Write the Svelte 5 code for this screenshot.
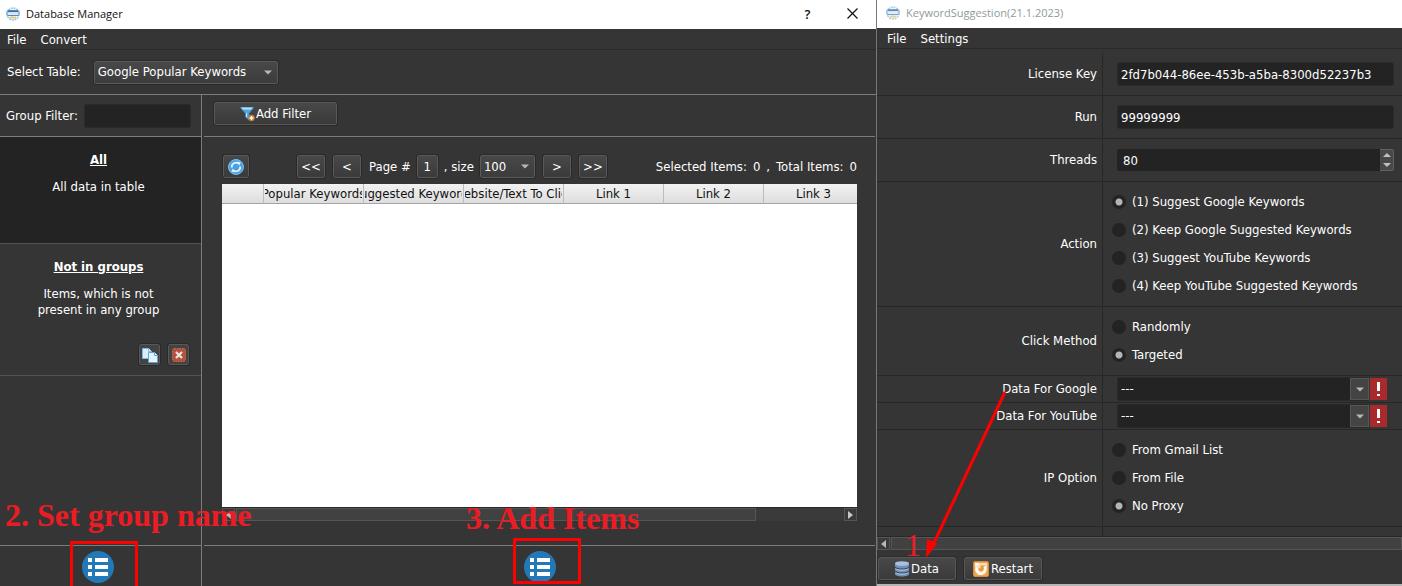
<script>
  let table = $state('Google Popular Keywords');
  let groupFilter = $state('');
  let pageSize = $state('100');
  let license = $state('2fd7b044-86ee-453b-a5ba-8300d52237b3');
  let run = $state('99999999');
  let threads = $state(80);
  let action = $state(0);
  let click = $state(1);
  let proxy = $state(2);

  const actions = [
    '(1) Suggest Google Keywords',
    '(2) Keep Google Suggested Keywords',
    '(3) Suggest YouTube Keywords',
    '(4) Keep YouTube Suggested Keywords'
  ];
  const clicks = ['Randomly', 'Targeted'];
  const proxies = ['From Gmail List', 'From File', 'No Proxy'];
  const columns = ['', 'Popular Keywords', 'Suggested Keywords', 'Website/Text To Click', 'Link 1', 'Link 2', 'Link 3'];
</script>

{#snippet appIcon()}
  <svg class="app-icon" width="14" height="14" viewBox="0 0 14 14" aria-hidden="true">
    <circle cx="7" cy="7" r="6" fill="#eaf5fb" stroke="#8fc6e2" stroke-width="1.4" stroke-dasharray="2 .8" />
    <rect x="1" y="3.5" width="12" height="5" rx="1" fill="#dce8f4" stroke="#5d89ba" />
    <path d="M2 4.500h10" stroke="#3f6ea8" stroke-width="1.200" />
    <path d="M4 10.500h2M8 10.500h2M6 9.500l2 2" stroke="#e8c06a" stroke-width="1.300" />
  </svg>
{/snippet}

{#snippet down()}
  <svg class="down" width="8" height="5" viewBox="0 0 8 5" aria-hidden="true"><path d="M0 .5h8L4 4.500z" fill="#b8b8b8" /></svg>
{/snippet}

{#snippet listIcon()}
  <svg width="32" height="32" viewBox="0 0 32 32" aria-hidden="true">
    <circle cx="16" cy="16" r="16" fill="#2379b7" />
    <path d="M6 9h4M13 9h13M6 16h4M13 16h13M6 23h4M13 23h13" stroke="#fff" stroke-width="4" />
  </svg>
{/snippet}

{#snippet radios(name, items, value, pick)}
  <div class="radios">
    {#each items as item, i}
      <label class="radio">
        <input type="radio" {name} checked={value === i} onchange={() => pick(i)} />
        {item}
      </label>
    {/each}
  </div>
{/snippet}

<div class="desktop">
  <section class="window manager">
    <header class="title">
      {@render appIcon()}
      <span>Database Manager</span>
      <button class="caption help" aria-label="Help">?</button>
      <button class="caption" aria-label="Close">
        <svg width="11" height="11" viewBox="0 0 11 11"><path d="M.5.5l10 10M10.500.5l-10 10" stroke="#111" stroke-width="1.200" /></svg>
      </button>
    </header>
    <nav class="menu">
      <button>File</button>
      <button>Convert</button>
    </nav>
    <div class="table-bar">
      <label for="table">Select Table:</label>
      <span class="combo">
        <select id="table" bind:value={table}><option>Google Popular Keywords</option></select>
        {@render down()}
      </span>
    </div>

    <div class="body">
      <aside>
        <div class="group-filter">
          <label for="group">Group Filter:</label>
          <input id="group" type="text" bind:value={groupFilter} />
        </div>
        <div class="group selected">
          <h2>All</h2>
          <p>All data in table</p>
        </div>
        <div class="group">
          <h2>Not in groups</h2>
          <p>Items, which is not present in any group</p>
          <div class="group-tools">
            <button class="tool" aria-label="Copy group">
              <svg width="16" height="16" viewBox="0 0 16 16">
                <path d="M.5 1.500h6l3 3v7h-9z" fill="#d9eefb" stroke="#7db9e6" />
                <path d="M6.500 1.500v3h3" fill="#fff" stroke="#7db9e6" />
                <path d="M6.500 5.500h6l3 3v7h-9z" fill="#e4f3fc" stroke="#5ea5dc" />
                <path d="M12.500 5.500v3h3" fill="#fff" stroke="#5ea5dc" />
              </svg>
            </button>
            <button class="tool" aria-label="Delete group">
              <svg width="14" height="14" viewBox="0 0 14 14">
                <rect x=".5" y=".5" width="13" height="13" rx="2" fill="#b0543f" stroke="#cf6a50" stroke-dasharray="1.500 1" />
                <path d="M4 4l6 6M10 4l-6 6" stroke="#f4e4df" stroke-width="2.200" />
              </svg>
            </button>
          </div>
        </div>
        <footer><button class="round" aria-label="Group menu">{@render listIcon()}</button></footer>
      </aside>

      <main>
        <div class="filters">
          <button class="btn add">
            <svg width="15" height="16" viewBox="0 0 15 16" aria-hidden="true">
              <path d="M.5 1.500h13L9 7.500V14l-3.500-3V7.500z" fill="#55a6dd" stroke="#3d86be" />
              <path d="M1 1.500h12l-1.500 2h-9z" fill="#b9e2f8" />
              <path d="M6.500 7v4" stroke="#c5e6f8" />
              <circle cx="11.500" cy="12" r="3.200" fill="#c9792f" />
              <path d="M11.500 10v4M9.500 12h4" stroke="#fff" stroke-width="1.300" />
            </svg>
            Add Filter
          </button>
        </div>
        <div class="content">
          <div class="pager">
            <button class="btn refresh" aria-label="Refresh">
              <svg width="16" height="16" viewBox="0 0 16 16">
                <circle cx="8" cy="8" r="7.500" fill="#4ba0de" stroke="#7cc0ee" />
                <path d="M3.800 8.500A4.200 4.200 0 0 1 10.500 4.600M12.200 7.500A4.200 4.200 0 0 1 5.500 11.400" fill="none" stroke="#e3f3fd" stroke-width="1.800" />
                <path d="M9.300 2.500l3.500 1-1.800 3.200zM6.700 13.500l-3.500-1L5 9.300z" fill="#e3f3fd" />
              </svg>
            </button>
            <button class="btn step">&lt;&lt;</button>
            <button class="btn step">&lt;</button>
            <div class="paging">
              <span>Page #</span>
              <button class="btn page">1</button>
              <label for="size">, size</label>
              <span class="combo size">
                <select id="size" bind:value={pageSize}><option>100</option></select>
                {@render down()}
              </span>
            </div>
            <button class="btn step">&gt;</button>
            <button class="btn step">&gt;&gt;</button>
            <span class="totals"><span>Selected Items:</span><span>0</span><span>,</span><span>Total Items:</span><span>0</span></span>
          </div>
          <div class="grid-view">
            <table>
              <thead>
                <tr>
                  {#each columns as column}
                    <th><div>{column}</div></th>
                  {/each}
                </tr>
              </thead>
            </table>
          </div>
          <div class="scroll">
            <button aria-label="Scroll left"><svg width="5" height="8" viewBox="0 0 5 8"><path d="M5 0v8L0 4z" fill="#b8b8b8" /></svg></button>
            <div class="thumb"></div>
            <button aria-label="Scroll right"><svg width="5" height="8" viewBox="0 0 5 8"><path d="M0 0v8l5-4z" fill="#c8c8c8" /></svg></button>
          </div>
        </div>
        <footer><button class="round" aria-label="Item menu">{@render listIcon()}</button></footer>
      </main>
    </div>

    <div class="frame frame-group"></div>
    <div class="frame frame-items"></div>
    <div class="note note-group">2. Set group name</div>
    <div class="note note-items">3. Add Items</div>
  </section>

  <section class="window suggestion">
    <header class="title inactive">
      {@render appIcon()}
      <span>KeywordSuggestion(21.1.2023)</span>
    </header>
    <nav class="menu">
      <button>File</button>
      <button>Settings</button>
    </nav>
    <form class="form" onsubmit={(e) => e.preventDefault()}>
      <div class="row field">
        <label for="license">License Key</label>
        <div class="cell"><input id="license" type="text" bind:value={license} /></div>
      </div>
      <div class="row field">
        <label for="run">Run</label>
        <div class="cell"><input id="run" type="text" bind:value={run} /></div>
      </div>
      <div class="row field">
        <label for="threads">Threads</label>
        <div class="cell">
          <div class="spin">
            <input id="threads" type="number" bind:value={threads} />
            <div class="arrows">
              <button type="button" aria-label="Increase" onclick={() => threads++}><svg width="8" height="4" viewBox="0 0 8 4"><path d="M0 4h8L4 0z" fill="#c0c0c0" /></svg></button>
              <button type="button" aria-label="Decrease" onclick={() => threads--}><svg width="8" height="4" viewBox="0 0 8 4"><path d="M0 0h8L4 4z" fill="#c0c0c0" /></svg></button>
            </div>
          </div>
        </div>
      </div>
      <div class="row options" role="radiogroup" aria-label="Action">
        <span class="name">Action</span>
        {@render radios('action', actions, action, (i) => (action = i))}
      </div>
      <div class="row options" role="radiogroup" aria-label="Click Method">
        <span class="name">Click Method</span>
        {@render radios('click', clicks, click, (i) => (click = i))}
      </div>
      {#each ['Google', 'YouTube'] as source}
        <div class="row data">
          <label for={source}>Data For {source}</label>
          <div class="cell">
            <span class="combo dark">
              <select id={source}><option>---</option></select>
              <span class="drop">{@render down()}</span>
            </span>
            <span class="alert">
              <svg width="17" height="22" viewBox="0 0 17 22" aria-hidden="true"><path d="M7 4h3v9H7zM7 16h3v2H7z" fill="#fff" /></svg>
            </span>
          </div>
        </div>
      {/each}
      <div class="row options" role="radiogroup" aria-label="IP Option">
        <span class="name">IP Option</span>
        {@render radios('proxy', proxies, proxy, (i) => (proxy = i))}
      </div>
      <div class="row rest"><span></span><div class="cell"></div></div>
    </form>
    <div class="scroll wide">
      <button aria-label="Scroll form left"><svg width="5" height="8" viewBox="0 0 5 8"><path d="M5 0v8L0 4z" fill="#b8b8b8" /></svg></button>
      <div class="thumb"></div>
    </div>
    <div class="actions">
      <button class="btn">
        <svg width="14" height="16" viewBox="0 0 14 16" aria-hidden="true">
          <path d="M0 2.500v10.500c0 1.500 3 2.500 7 2.500s7-1 7-2.500V2.500z" fill="#7390b8" />
          <ellipse cx="7" cy="2.500" rx="7" ry="2.300" fill="#a9c0de" />
          <path d="M0 6c1 1.500 4 2 7 2s6-.5 7-2M0 10c1 1.500 4 2 7 2s6-.5 7-2" fill="none" stroke="#33415a" stroke-width="1.200" />
          <path d="M.5 7.300c1.200 1.400 3.500 1.900 6.500 1.900s5.300-.5 6.500-1.900M.5 11.300c1.200 1.400 3.500 1.900 6.500 1.900s5.300-.5 6.500-1.900" fill="none" stroke="#b4c8e2" stroke-width="1" />
        </svg>
        Data
      </button>
      <button class="btn">
        <svg width="16" height="16" viewBox="0 0 16 16" aria-hidden="true">
          <rect x=".5" y=".5" width="15" height="15" rx="1.500" fill="#eda552" stroke="#d98a34" />
          <path d="M2 2h12v5l-1.500 5L9 14H5L2 10z" fill="#f8dfba" />
          <path d="M4.300 6.500a4.200 4.200 0 1 0 7.200-.6" fill="none" stroke="#fffaf0" stroke-width="2.400" />
          <path d="M5.600 6.600a2.700 2.700 0 1 0 4.700-.4L12 4.500H7.500V8z" fill="#e8963a" />
          <path d="M2 2h4v2.500H2z" fill="#fffaf0" />
        </svg>
        Restart
      </button>
    </div>

    <svg class="arrow" width="84" height="172" viewBox="0 0 84 172" aria-hidden="true">
      <path d="M82 4L9 159" stroke="#f00" stroke-width="3" />
      <path d="M3 170l1-19 10 4.500z" fill="#f00" />
    </svg>
    <div class="note note-data">1</div>
  </section>
</div>

<style>
  :global(body) { background: #333; }
  :global(*) { box-sizing: border-box; }

  .desktop {
    display: grid;
    grid-template-columns: minmax(0, 1fr) minmax(0, 525px);
    min-height: 100vh;
    background: #353535;
    color: #fff;
    font: 13px/16px "DejaVu Sans Condensed", "Noto Sans", sans-serif;
  }
  button, input, select { font: inherit; color: inherit; margin: 0; }
  button { padding: 0; border: 0; background: none; display: inline-flex; align-items: center; justify-content: center; }
  svg { display: block; flex: none; }

  .window { position: relative; display: flex; flex-direction: column; min-width: 0; }
  .manager { overflow: hidden; border-right: 1px solid #777; }

  .title {
    display: flex;
    align-items: center;
    height: 29px;
    padding: 0 18px 2px 6px;
    gap: 6px;
    background: #fff;
    color: #111;
    font: 11px/16px "Open Sans", "Noto Sans", sans-serif;
  }
  .title span { flex: 1; }
  .inactive { height: 28px; padding-left: 9px; color: #8f9a9a; }
  .inactive .app-icon { opacity: 0.8; }
  .caption { width: 11px; height: 16px; }
  .help { margin-right: 28px; font-weight: 600; font-size: 13px; }

  .menu { display: flex; gap: 14px; height: 21px; padding: 2px 7px 0; border-bottom: 1px solid #2a2a2a; }
  .suggestion .menu { padding: 2px 10px 0; }

  .table-bar { display: flex; align-items: center; gap: 13px; height: 45px; padding: 0 7px; border-bottom: 1px solid #7c7c7c; }

  .combo { position: relative; display: flex; align-items: center; }
  .combo select {
    appearance: none;
    width: 184px;
    height: 23px;
    padding: 0 20px 0 3px;
    border: 1px solid #5a5a5a;
    border-radius: 2px;
    outline: 1px solid #2a2a2a;
    background: linear-gradient(#484848, #3c3c3c);
  }
  .combo .down { position: absolute; right: 6px; pointer-events: none; }
  .combo.size select { width: 55px; }

  .btn {
    height: 23px;
    border: 1px solid #585858;
    border-radius: 2px;
    outline: 1px solid #2a2a2a;
    background: linear-gradient(#484848, #3a3a3a);
  }

  .body { flex: 1; display: grid; grid-template-columns: 202px minmax(0, 1fr); }
  aside { display: flex; flex-direction: column; border-right: 1px solid #7c7c7c; }
  main { display: flex; flex-direction: column; min-width: 0; padding: 0 1px 0 2px; }

  .group-filter { display: flex; align-items: center; gap: 6px; height: 42px; padding: 0 10px 0 6px; border-bottom: 1px solid #7c7c7c; }
  input[type='text'], input[type='number'] {
    flex: 1;
    min-width: 0;
    height: 24px;
    padding: 0 3px;
    border: 1px solid #2a2a2a;
    border-radius: 3px;
    background: #232323;
    outline: 0;
  }

  .group { height: 132px; padding: 15px 32px 0 28px; border-bottom: 1px solid #525252; text-align: center; }
  .group.selected { height: 107px; background: #232323; }
  h2 { margin: 0 0 11px; font-size: 13px; line-height: 16px; text-decoration: underline; }
  p { margin: 0; }
  .group-tools { display: flex; gap: 8px; justify-content: flex-end; margin: 26px -20px 0 0; }
  .tool { width: 21px; height: 21px; border: 1px solid #585858; border-radius: 2px; outline: 1px solid #2a2a2a; background: #434343; }

  footer { display: flex; justify-content: center; height: 41px; margin-top: auto; padding-top: 5px; border-top: 1px solid #7c7c7c; }
  aside footer { padding-right: 6px; }
  .round { width: 32px; height: 32px; }

  .filters { display: flex; height: 42px; padding: 7px 10px 0; border-bottom: 1px solid #7c7c7c; }
  .add { width: 123px; gap: 1px; }

  .content { flex: 1; display: flex; flex-direction: column; padding: 18px 18px 24px; }
  .pager { display: flex; align-items: center; height: 23px; gap: 8px; margin-bottom: 6px; white-space: nowrap; }
  .refresh { width: 26px; margin: 0 40px 0 1px; }
  .step { width: 28px; }
  .page { width: 21px; }
  .paging { display: flex; align-items: center; gap: 6px; }
  .totals { display: flex; gap: 6px; margin-left: auto; }

  .grid-view { flex: 1; overflow: hidden; background: #fff; color: #111; }
  table { width: 642px; table-layout: fixed; border-collapse: separate; border-spacing: 0; }
  th { width: 100px; height: 20px; padding: 0 1px; border-right: 1px solid #bdbdbd; border-bottom: 1px solid #a4a4a4; background: linear-gradient(#f2f2f2, #dedede); font-weight: 400; }
  th:first-child { width: 42px; }
  th div { display: flex; justify-content: center; overflow: hidden; white-space: nowrap; }

  .scroll { display: flex; gap: 1px; height: 14px; border-top: 1px solid #292929; background: #3a3a3a; }
  .scroll button { width: 13px; border: 1px solid #555; background: #3a3a3a; }
  .scroll .thumb { flex: 0 1 520px; border: 1px solid #555; background: #414141; }
  .scroll button:last-child { margin-left: auto; }
  .scroll.wide .thumb { flex: 1; }

  .form { flex: 1; display: flex; flex-direction: column; padding-top: 4px; }
  .row { display: grid; grid-template-columns: 226px minmax(0, 1fr); border-bottom: 1px solid #272727; }
  .row > :first-child { display: flex; align-items: center; justify-content: flex-end; padding-right: 5px; border-right: 1px solid #272727; }
  .cell { display: flex; align-items: center; padding: 0 8px 0 14px; }
  .field { height: 43px; }
  .data { height: 27px; }
  .rest { flex: 1; border-bottom: 0; }

  .spin { flex: 1; display: flex; background: #232323; border-radius: 3px; }
  .spin input { appearance: textfield; height: 22px; border: 0; padding: 0 6px; }
  .spin input::-webkit-inner-spin-button { display: none; }
  .arrows { display: flex; flex-direction: column; width: 14px; border: 1px solid #606060; border-left: 0; border-radius: 0 2px 2px 0; background: #484848; }
  .arrows button { flex: 1; }

  .radios { padding: 6px 9px; }
  .radio { display: flex; align-items: center; gap: 6px; height: 28px; }
  .radio input {
    appearance: none;
    width: 14px;
    height: 14px;
    margin: 0;
    border-radius: 50%;
    background: #232323;
  }
  .radio input:checked { background: radial-gradient(circle, #b4b4b4 0 3px, #232323 4px); }

  .combo.dark { flex: 1; }
  .combo.dark select { width: 100%; height: 24px; border-color: #2a2a2a; outline: 0; background: #232323; }
  .drop {
    position: absolute;
    right: 0;
    display: flex;
    align-items: center;
    justify-content: center;
    width: 19px;
    height: 22px;
    border: 1px solid #565656;
    background: #444;
    pointer-events: none;
  }
  .combo .drop :global(.down) { position: static; }
  .alert { margin: 0 7px 0 1px; background: #a82a2d; }

  .actions { display: flex; gap: 8px; height: 36px; padding: 7px 1px; border-bottom: 2px solid #b5b5b5; }
  .suggestion .scroll { flex: none; }
  .actions .btn { width: 78px; gap: 2px; }

  .frame { position: absolute; border: 3px solid #f00; width: 68px; pointer-events: none; }
  .frame-group { left: 70px; bottom: -3px; height: 48px; }
  .frame-items { left: 513px; bottom: 2px; height: 46px; }
  .note { position: absolute; color: #ec1c24; font: bold 32px/32px "Liberation Serif", serif; white-space: nowrap; pointer-events: none; }
  .note-group { left: 5px; bottom: 55px; }
  .note-items { left: 466px; bottom: 52px; }
  .note-data { left: 28px; bottom: 25px; font-weight: 400; }
  .arrow { position: absolute; left: 46px; bottom: 26px; pointer-events: none; }
</style>
